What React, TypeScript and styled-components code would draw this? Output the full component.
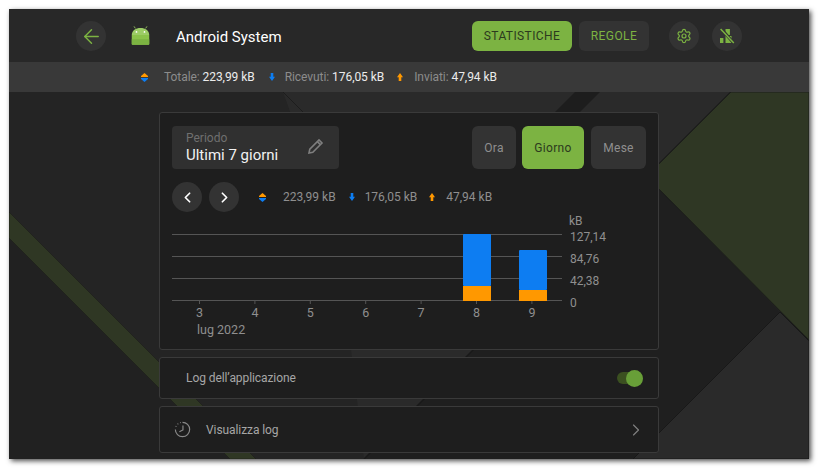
import React from "react";
import styled, { createGlobalStyle } from "styled-components";
import { ArrowLeft, ChevronLeft, ChevronRight, Settings } from "lucide-react";

const Global = createGlobalStyle`
  html, body { margin: 0; background: #fff; }
  body { font-family: Roboto, "Liberation Sans", sans-serif; }
`;

const Page = styled.div`
  width: 824px;
  height: 474px;
  padding: 9px 15px 15px 9px;
  box-sizing: border-box;
`;

const Window = styled.div`
  position: relative;
  width: 800px;
  height: 450px;
  background: #212121;
  box-shadow: 2px 2px 5px rgba(0, 0, 0, 0.7);
  overflow: hidden;
  display: flex;
  flex-direction: column;
`;

const Backdrop = styled.svg`
  position: absolute;
  left: 0;
  top: 0;
`;

const Header = styled.header`
  position: relative;
  height: 53px;
  flex: none;
  background: #282828;
  display: flex;
  align-items: flex-start;
  padding: 12px 0 0 67px;
  box-sizing: border-box;
`;

const RoundButton = styled.button`
  width: 30px;
  height: 30px;
  flex: none;
  padding: 0;
  border: 0;
  border-radius: 50%;
  background: #333333;
  color: #7cb342;
  display: flex;
  align-items: center;
  justify-content: center;
`;

const Logo = styled.svg`
  margin: 5px 0 0 25px;
  flex: none;
`;

const Title = styled.h1`
  margin: 5px 0 0 26px;
  width: 296px;
  flex: none;
  font-size: 15px;
  line-height: 22px;
  font-weight: 400;
  color: #ffffff;
`;

const TabButton = styled.button<{ $active?: boolean }>`
  height: 30px;
  padding: 0;
  width: ${(p) => (p.$active ? "100px" : "70px")};
  margin-right: ${(p) => (p.$active ? "7px" : "20px")};
  flex: none;
  border: 0;
  border-radius: 6px;
  background: ${(p) => (p.$active ? "#7cb342" : "#333333")};
  color: ${(p) => (p.$active ? "#2c3a1e" : "#7cb342")};
  font-family: inherit;
  font-size: 12px;
  letter-spacing: 0.4px;
  font-weight: 400;
`;

const IconGap = styled.div`
  width: 13px;
  flex: none;
`;

const StatsBar = styled.div`
  position: relative;
  height: 30px;
  flex: none;
  background: #393939;
  display: flex;
  align-items: center;
  padding-left: 132px;
  font-size: 12px;
  letter-spacing: -0.06px;
  color: #8c8c8c;
`;

const StatLabel = styled.span<{ $gap: number }>`
  margin: 0 ${(p) => p.$gap}px 0 0;
  white-space: nowrap;
  b {
    font-weight: 400;
    color: #ececec;
  }
`;

const IconSlot = styled.span<{ $w: number; $ml?: number }>`
  width: ${(p) => p.$w}px;
  margin-left: ${(p) => p.$ml ?? 0}px;
  flex: none;
  display: flex;
  align-items: center;
`;

const Main = styled.main`
  position: relative;
  width: 500px;
  margin: 20px 0 0 150px;
  display: flex;
  flex-direction: column;
  gap: 7px;
`;

const Card = styled.section`
  background: #1e1e1e;
  border: 1px solid #3a3a3a;
  border-radius: 3px;
  box-sizing: border-box;
`;

const StatsCard = styled(Card)`
  height: 238px;
  padding: 13px 12px 0 12px;
`;

const TopRow = styled.div`
  display: flex;
  align-items: flex-start;
`;

const Period = styled.div`
  width: 167px;
  height: 43px;
  border-radius: 4px;
  background: #303030;
  box-sizing: border-box;
  padding: 4px 14px 0 14px;
  display: flex;
  justify-content: space-between;
  align-items: center;
  margin-right: auto;
`;

const PeriodText = styled.div`
  display: flex;
  flex-direction: column;
  margin-top: -3px;
`;

const PeriodLabel = styled.span`
  font-size: 12px;
  line-height: 14px;
  color: #6f6f6f;
`;

const PeriodValue = styled.span`
  font-size: 15px;
  line-height: 20px;
  color: #f2f2f2;
`;

const PencilIcon = styled.svg`
  margin-top: -7px;
`;

const Range = styled.button<{ $active?: boolean; $w: number; $ml: number }>`
  width: ${(p) => p.$w}px;
  height: 43px;
  margin-left: ${(p) => p.$ml}px;
  padding: 0;
  border: 0;
  border-radius: 6px;
  background: ${(p) => (p.$active ? "#7cb342" : "#333333")};
  color: ${(p) => (p.$active ? "#2c3a1e" : "#8f8f8f")};
  font-family: inherit;
  font-size: 12px;
  letter-spacing: 0.3px;
`;

const NavRow = styled.div`
  display: flex;
  align-items: center;
  margin-top: 13px;
  font-size: 12px;
  color: #8f8f8f;
`;

const NavButton = styled(RoundButton)`
  color: #fff;
  margin-right: 7px;
`;

const NavStat = styled.span<{ $gap: number }>`
  margin-right: ${(p) => p.$gap}px;
  white-space: nowrap;
`;

const Chart = styled.svg`
  display: block;
  margin: 7px 0 0 0;
  overflow: visible;
  text {
    font-family: Roboto, "Liberation Sans", sans-serif;
    font-size: 12px;
    fill: #8f8f8f;
  }
  .axis {
    font-size: 12.5px;
  }
`;

const Row = styled(Card)<{ $h: number }>`
  height: ${(p) => p.$h}px;
  display: flex;
  align-items: center;
  font-size: 12px;
  letter-spacing: -0.08px;
  color: #a6a6a6;
`;

const ToggleLabel = styled.span`
  margin-left: 26px;
  margin-right: auto;
`;

const Toggle = styled.span`
  position: relative;
  width: 26px;
  height: 12px;
  margin-right: 15px;
  border-radius: 6px;
  background: #3b5020;
`;

const Knob = styled.span`
  position: absolute;
  right: 0;
  top: -2.5px;
  width: 17px;
  height: 17px;
  border-radius: 50%;
  background: #689f38;
`;

const LinkLabel = styled.span`
  margin-left: 15px;
  margin-right: auto;
`;

const ClockIcon = styled.svg`
  margin-left: 14px;
`;

const Chevron = styled(ChevronRight)`
  margin-right: 12px;
  color: #808080;
`;

const Total = () => (
  <svg width="7" height="9" viewBox="0 0 7 9">
    <path d="M3.5 0 7 3H0z" fill="#ff9800" />
    <rect x="0" y="3" width="7" height="1" fill="#ff9800" />
    <rect x="0" y="5" width="7" height="1" fill="#0d7df2" />
    <path d="M0 6h7L3.5 9z" fill="#0d7df2" />
  </svg>
);

const Down = () => (
  <svg width="6" height="8" viewBox="0 0 6 8">
    <path d="M1.7 0h2.6v3.8H6L3 8 0 3.8h1.7z" fill="#0d7df2" />
  </svg>
);

const Up = () => (
  <svg width="6" height="8" viewBox="0 0 6 8">
    <path d="M1.7 8h2.6V4.2H6L3 0 0 4.2h1.7z" fill="#ff9800" />
  </svg>
);

const days = ["3", "4", "5", "6", "7", "8", "9"];
const gridY = [0, 22, 44, 66];
const yLabels = ["127,14", "84,76", "42,38", "0"];

export default function App() {
  return (
    <>
      <Global />
      <Page>
        <Window>
          <Backdrop width="800" height="450" viewBox="0 0 800 450">
            <rect x="0" y="83" width="800" height="367" fill="#212121" />
            <path d="M0 83H800V450H247L0 203z" fill="#242424" />
            <path d="M0 203L247 450H221L0 229z" fill="#2f3724" stroke="#1c1e1a" strokeWidth="0.6" />
            <path d="M274 83H722L355 450L330 239z" fill="#2a2a2a" />
            <path d="M274 83L330 139" stroke="#1d1d1d" strokeWidth="1" />
            <path d="M566 83H591L420 254H395z" fill="#1d1d1d" />
            <path d="M637.5 167.5L771 303L624 450H355z" fill="#1f1f1f" />
            <path d="M722 83L355 450" stroke="#191919" strokeWidth="1.5" />
            <path d="M722 83H800V331L637.5 167.5z" fill="#2f3724" stroke="#1c1e1a" strokeWidth="1" />
            <path d="M771 303L800 332V450H624z" fill="#2a2a2a" stroke="#181818" strokeWidth="1" />
          </Backdrop>
          <Header>
            <RoundButton aria-label="Indietro"><ArrowLeft size={23} strokeWidth={1.5} /></RoundButton>
            <Logo width="19" height="19" viewBox="0 0 20 20">
              <path d="M4.6 2.5 3.2 0.4M15.4 2.5l1.4-2.1" stroke="#9ccc65" strokeWidth="0.9" />
              <path d="M0.8 9.5C0.9 5 5 2.2 10 2.2s9.1 2.8 9.2 7.3z" fill="#9ccc65" />
              <path d="M0.8 9.5h18.4V19a.8.8 0 0 1-.8.8H1.6a.8.8 0 0 1-.8-.8z" fill="#8bc34a" />
              <path d="M0.8 14h18.4v5a.8.8 0 0 1-.8.8H1.6a.8.8 0 0 1-.8-.8z" fill="#7cb342" />
              <circle cx="5.8" cy="6.2" r="0.9" fill="#fff" />
              <circle cx="14.2" cy="6.2" r="0.9" fill="#fff" />
            </Logo>
            <Title>Android System</Title>
            <TabButton $active>STATISTICHE</TabButton>
            <TabButton>REGOLE</TabButton>
            <RoundButton aria-label="Impostazioni"><Settings size={16} strokeWidth={1.8} /></RoundButton>
            <IconGap />
            <RoundButton aria-label="Rete">
              <svg width="16" height="16" viewBox="0 0 16 16">
                <path d="M1 15v-5h3.4v5zM6.5 15V8h6v7zM6.5 1h4.4v6H6.5z" fill="#7cb342" />
                <path d="M2 0.5 15 15.5" stroke="#333" strokeWidth="3" />
                <path d="M1.6 1 14.8 15" stroke="#7cb342" strokeWidth="1.5" />
              </svg>
            </RoundButton>
          </Header>
          <StatsBar>
            <IconSlot $w={23}><Total /></IconSlot>
            <StatLabel $gap={14}>Totale: <b>223,99 kB</b></StatLabel>
            <IconSlot $w={16}><Down /></IconSlot>
            <StatLabel $gap={13}>Ricevuti: <b>176,05 kB</b></StatLabel>
            <IconSlot $w={17}><Up /></IconSlot>
            <StatLabel $gap={0}>Inviati: <b>47,94 kB</b></StatLabel>
          </StatsBar>
          <Main>
            <StatsCard>
              <TopRow>
                <Period>
                  <PeriodText>
                    <PeriodLabel>Periodo</PeriodLabel>
                    <PeriodValue>Ultimi 7 giorni</PeriodValue>
                  </PeriodText>
                  <PencilIcon width="18" height="18" viewBox="0 0 18 18" fill="none" stroke="#7e7e7e" strokeWidth="1.6">
                    <path d="M2 16l.8-3.8L12 3l3 3-9.2 9.2z" />
                    <path d="M10.4 4.6l3 3" />
                  </PencilIcon>
                </Period>
                <Range $w={44} $ml={6}>Ora</Range>
                <Range $w={62} $ml={6} $active>Giorno</Range>
                <Range $w={55} $ml={7}>Mese</Range>
              </TopRow>
              <NavRow>
                <NavButton aria-label="Precedente"><ChevronLeft size={17} strokeWidth={2.4} /></NavButton>
                <NavButton aria-label="Successivo"><ChevronRight size={17} strokeWidth={2.4} /></NavButton>
                <IconSlot $w={24} $ml={13}><Total /></IconSlot>
                <NavStat $gap={13}>223,99 kB</NavStat>
                <IconSlot $w={16}><Down /></IconSlot>
                <NavStat $gap={12}>176,05 kB</NavStat>
                <IconSlot $w={17}><Up /></IconSlot>
                <NavStat $gap={0}>47,94 kB</NavStat>
              </NavRow>
              <Chart width="474" height="115" viewBox="0 0 474 115">
                <text x="397" y="6">kB</text>
                {gridY.map((y) => (
                  <line key={y} x1="0" x2="390" y1={15.5 + y} y2={15.5 + y} stroke="#555" strokeWidth="1" />
                ))}
                {yLabels.map((l, i) => (
                  <text key={l} x="398" y={21.5 + gridY[i]}>{l}</text>
                ))}
                {days.map((d, i) => {
                  const x = 27.5 + i * 55.4;
                  return (
                    <g key={d}>
                      <line x1={x} x2={x} y1="81" y2="85" stroke="#555" />
                      <text className="axis" x={x} y="98" textAnchor="middle">{d}</text>
                    </g>
                  );
                })}
                <text className="axis" x="25" y="115">lug 2022</text>
                <rect x="291" y="15" width="28" height="52" rx="1" fill="#0d7df2" />
                <rect x="291" y="67" width="28" height="15" fill="#ff9800" />
                <rect x="347" y="31" width="28" height="40" rx="1" fill="#0d7df2" />
                <rect x="347" y="71" width="28" height="11" fill="#ff9800" />
              </Chart>
            </StatsCard>
            <Row $h={42}>
              <ToggleLabel>Log dell’applicazione</ToggleLabel>
              <Toggle><Knob /></Toggle>
            </Row>
            <Row $h={47}>
              <ClockIcon width="17" height="17" viewBox="0 0 19 19" fill="none" stroke="#8a8a8a" strokeWidth="1.3">
                <path d="M9.5 1.5a8 8 0 1 1-8 8" />
                <path d="M2 6.5l.6-1M4 3.6l.8-.7M6.8 2l.8-.3" strokeDasharray="1 1" />
                <path d="M10 5v5l-4 2" />
              </ClockIcon>
              <LinkLabel>Visualizza log</LinkLabel>
              <Chevron size={20} strokeWidth={1.4} />
            </Row>
          </Main>
        </Window>
      </Page>
    </>
  );
}
